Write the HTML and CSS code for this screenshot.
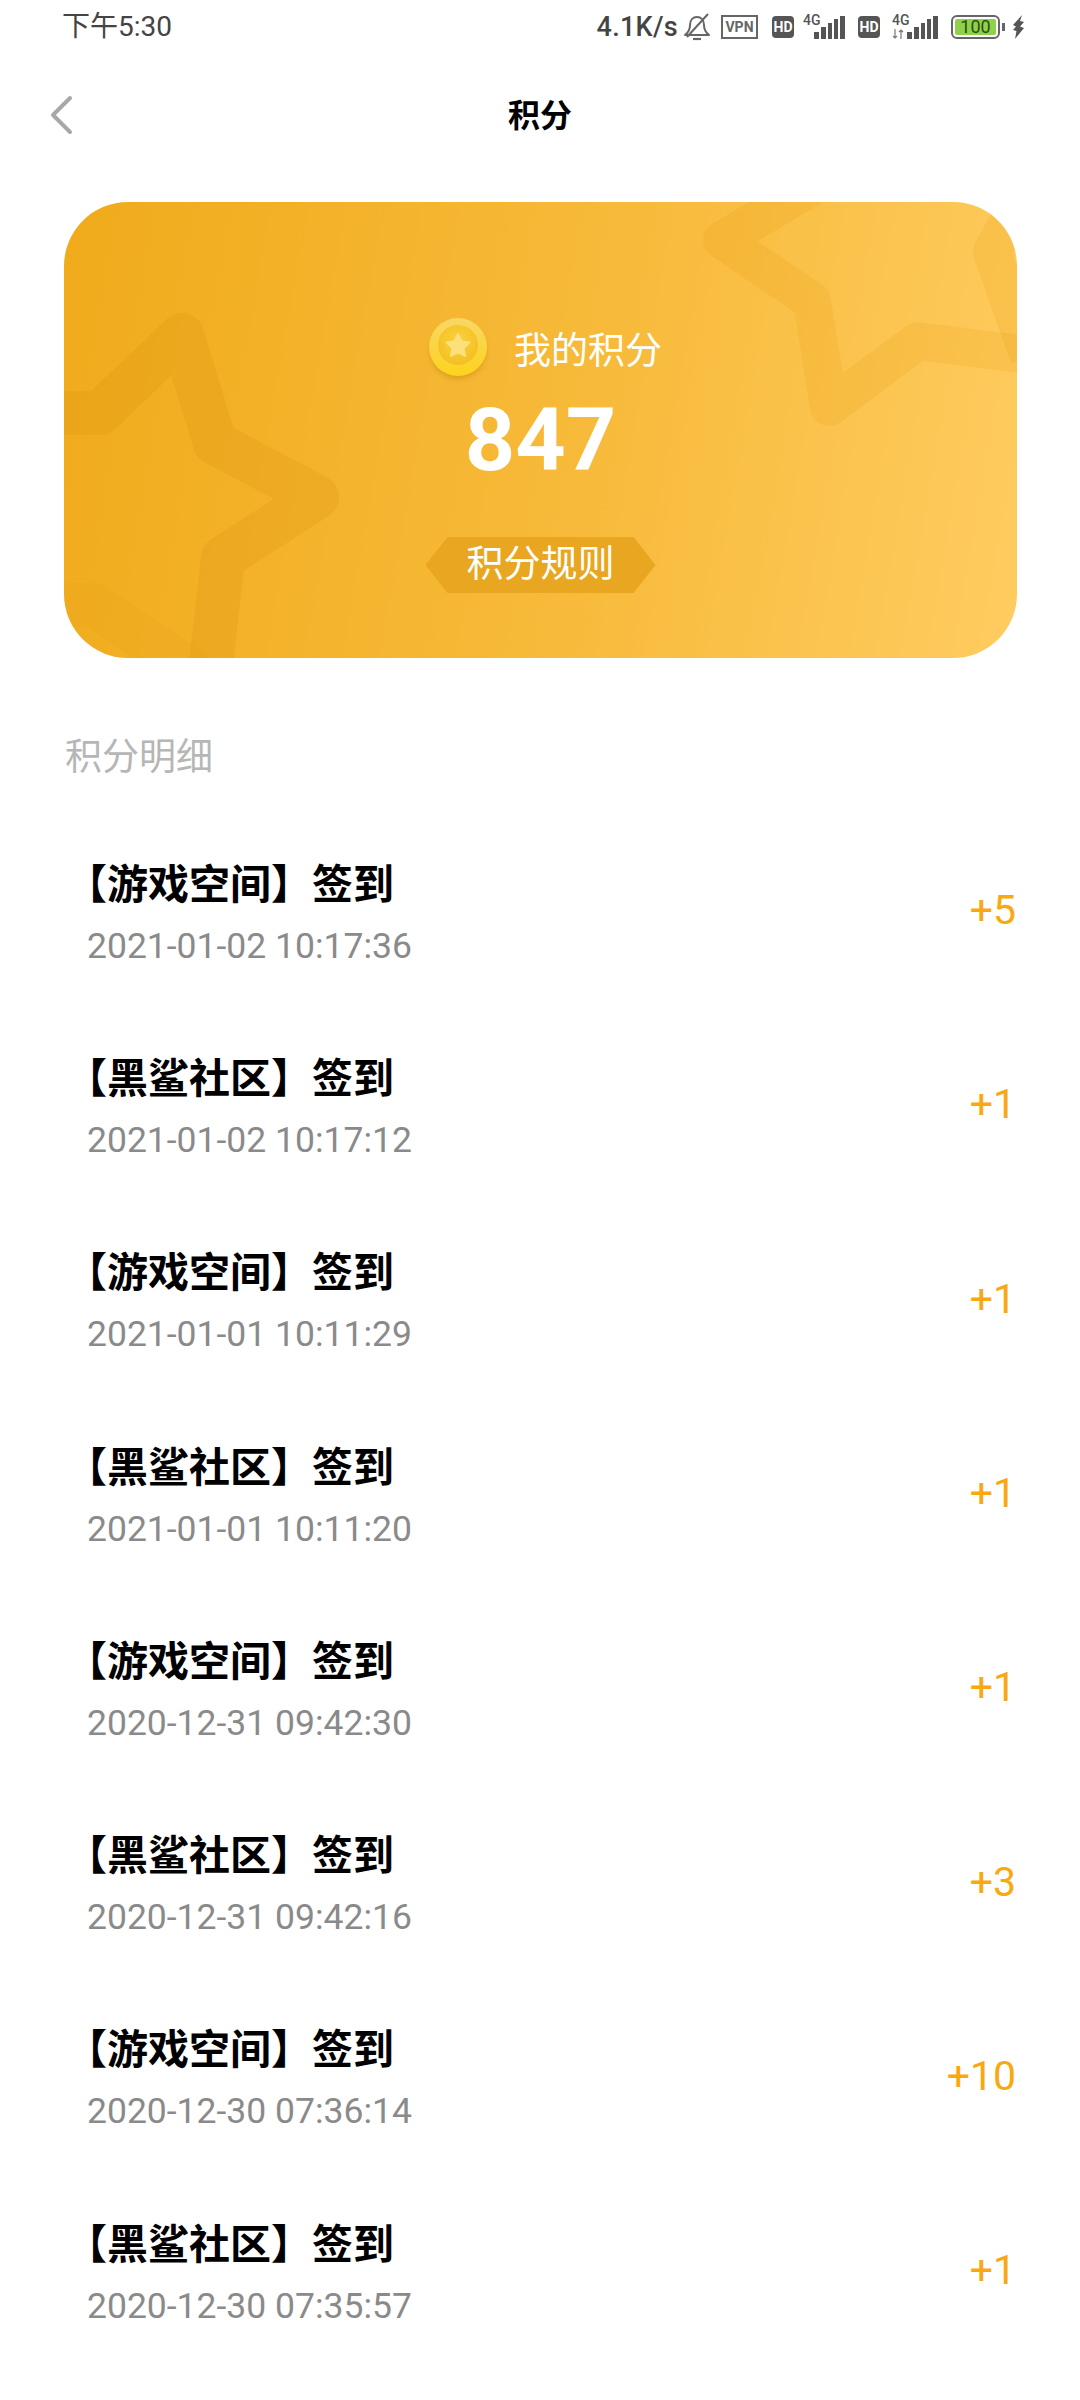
FILE: index.html
```html
<!DOCTYPE html>
<html lang="zh-CN">
<head>
    <meta charset="UTF-8">
    <meta name="viewport" content="width=device-width, initial-scale=1.0">
    <title>积分</title>
    <link rel="stylesheet" href="styles.css">
</head>
<body>
    <svg class="defs" width="0" height="0" aria-hidden="true">
        <symbol id="signal" viewBox="0 0 31 23">
            <rect x="0" y="16" width="5" height="7" fill="#555"/>
            <rect x="7" y="11" width="5" height="12" fill="#555"/>
            <rect x="14" y="7" width="4" height="16" fill="#555"/>
            <rect x="20" y="3" width="4" height="20" fill="#555"/>
            <rect x="26" y="0" width="5" height="23" fill="#555"/>
        </symbol>
    </svg>

    <div class="status-bar">
        <span class="status-time">下午5:30</span>
        <div class="status-icons">
            <span class="net-speed">4.1K/s</span>
            <svg class="icon-bell" width="26" height="28" viewBox="0 0 26 28">
                <path d="M1 22c4-3 5-6 5-10 0-5 3-8 7-8s7 3 7 8c0 4 1 7 5 10z" fill="none" stroke="#666" stroke-width="2" stroke-linejoin="round"/>
                <path d="M9 26h8" stroke="#666" stroke-width="2.200"/>
                <path d="M3 24L24 1" stroke="#666" stroke-width="2"/>
            </svg>
            <span class="vpn">VPN</span>
            <span class="hd">HD</span>
            <div class="net-block">
                <span class="net-4g">4G</span>
                <svg class="signal" width="31" height="23"><use href="#signal"/></svg>
            </div>
            <span class="hd hd-second">HD</span>
            <div class="net-block net-block-wide">
                <span class="net-4g">4G</span>
                <svg class="arrows" width="12" height="10" viewBox="0 0 12 10">
                    <path d="M3 0v9M1 7l2 2 2-2M9 10V1M7 3l2-2 2 2" fill="none" stroke="#777" stroke-width="1.2"/>
                </svg>
                <svg class="signal" width="31" height="23"><use href="#signal"/></svg>
            </div>
            <div class="battery"><span class="battery-level">100</span></div>
            <span class="battery-nub"></span>
            <svg class="icon-bolt" width="13" height="24" viewBox="0 0 13 24">
                <path d="M10 0L1 10l3 1.500L1 15l3.500 1L3 24l9-11-4-1.500L12 7 8 6z" fill="#555"/>
            </svg>
        </div>
    </div>

    <header class="nav-bar">
        <svg class="back-icon" width="24" height="40" viewBox="0 0 24 40">
            <path d="M21 3L4 20l17 17" fill="none" stroke="#a8a8a8" stroke-width="4" stroke-linecap="round" stroke-linejoin="round"/>
        </svg>
        <h1 class="nav-title">积分</h1>
    </header>

    <section class="points-card">
        <svg class="card-stars" width="953" height="456" viewBox="0 0 953 456">
            <path class="star-faint" d="M-20 403H30L130 470"/>
            <path class="star-dark" d="M-20 211H36L118 133L151 241L253 295L159 356L146 470"/>
            <path class="star-light" d="M756 -20L658 38L748 99L765 205L854 139L980 155"/>
            <path class="star-light" d="M960 -10L928 50L965 155"/>
        </svg>
        <div class="card-label-row">
            <svg class="coin" width="66" height="70" viewBox="0 0 66 70">
                <defs>
                    <radialGradient id="coinInner" cx="50%" cy="40%" r="60%">
                        <stop offset="0" stop-color="#fbd23e"/>
                        <stop offset="1" stop-color="#f4bf22"/>
                    </radialGradient>
                    <linearGradient id="coinRim" x1="0" y1="0" x2="0" y2="1">
                        <stop offset="0" stop-color="#f8d766"/>
                        <stop offset="1" stop-color="#fdd31c"/>
                    </linearGradient>
                    <filter id="coinShadow" x="-20%" y="-20%" width="140%" height="140%">
                        <feGaussianBlur stdDeviation="2.500"/>
                    </filter>
                </defs>
                <circle cx="33" cy="37" r="28" fill="#c98a14" opacity=".55" filter="url(#coinShadow)"/>
                <circle cx="33" cy="33" r="29" fill="url(#coinRim)"/>
                <circle cx="33" cy="31" r="20" fill="url(#coinInner)"/>
                <path d="M33 20l3.500 7.500 8 1-6 5.500 1.500 8-7-4-7 4 1.500-8-6-5.500 8-1z" fill="#fbe07c" stroke="#fbe07c" stroke-width="2" stroke-linejoin="round"/>
            </svg>
            <span class="card-label">我的积分</span>
        </div>
        <div class="card-total">847</div>
        <div class="rule-btn">积分规则</div>
    </section>

    <h2 class="section-title">积分明细</h2>

    <ul class="record-list">
        <li class="record">
            <div class="record-info"><p class="record-name">【游戏空间】签到</p><p class="record-time">2021-01-02 10:17:36</p></div>
            <span class="record-points">+5</span>
        </li>
        <li class="record">
            <div class="record-info"><p class="record-name">【黑鲨社区】签到</p><p class="record-time">2021-01-02 10:17:12</p></div>
            <span class="record-points">+1</span>
        </li>
        <li class="record">
            <div class="record-info"><p class="record-name">【游戏空间】签到</p><p class="record-time">2021-01-01 10:11:29</p></div>
            <span class="record-points">+1</span>
        </li>
        <li class="record">
            <div class="record-info"><p class="record-name">【黑鲨社区】签到</p><p class="record-time">2021-01-01 10:11:20</p></div>
            <span class="record-points">+1</span>
        </li>
        <li class="record">
            <div class="record-info"><p class="record-name">【游戏空间】签到</p><p class="record-time">2020-12-31 09:42:30</p></div>
            <span class="record-points">+1</span>
        </li>
        <li class="record">
            <div class="record-info"><p class="record-name">【黑鲨社区】签到</p><p class="record-time">2020-12-31 09:42:16</p></div>
            <span class="record-points">+3</span>
        </li>
        <li class="record">
            <div class="record-info"><p class="record-name">【游戏空间】签到</p><p class="record-time">2020-12-30 07:36:14</p></div>
            <span class="record-points">+10</span>
        </li>
        <li class="record">
            <div class="record-info"><p class="record-name">【黑鲨社区】签到</p><p class="record-time">2020-12-30 07:35:57</p></div>
            <span class="record-points">+1</span>
        </li>
    </ul>
</body>
</html>
```

FILE: styles.css
```css
* {
    box-sizing: border-box;
}

body {
    margin: 0;
    height: 2400px;
    overflow: hidden;
    background: #fff;
    font-family: Roboto, "Noto Sans CJK SC", sans-serif;
    color: #000;
}

.defs {
    position: absolute;
}

/* status bar */
.status-bar {
    display: flex;
    justify-content: space-between;
    align-items: center;
    height: 54px;
    padding: 0 55px 0 62px;
}

.status-time {
    font-size: 28px;
    line-height: 50px;
    margin-bottom: 1px;
    color: #444;
}

.status-icons {
    display: flex;
    align-items: center;
    height: 54px;
}

.net-speed {
    font-size: 27px;
    font-weight: 500;
    letter-spacing: 0.3px;
    color: #444;
    margin-right: 6px;
}

.icon-bell {
    margin-right: 11px;
}

.vpn {
    width: 37px;
    height: 24px;
    border: 2px solid #666;
    font-size: 14px;
    font-weight: 700;
    line-height: 20px;
    text-align: center;
    color: #666;
    margin-right: 14px;
}

.hd {
    width: 22px;
    height: 22px;
    border-radius: 4px;
    background: #555;
    font-size: 14px;
    font-weight: 700;
    line-height: 22px;
    text-align: center;
    color: #fff;
    margin-right: 9px;
}

.net-block {
    position: relative;
    width: 42px;
    height: 24px;
    margin-right: 13px;
}

.net-block-wide {
    width: 46px;
    margin-left: 3px;
}

.net-4g {
    position: absolute;
    left: 0;
    top: -2px;
    font-size: 14px;
    font-weight: 500;
    line-height: 14px;
    color: #555;
}

.signal {
    position: absolute;
    right: 0;
    bottom: 0;
}

.arrows {
    position: absolute;
    left: 0;
    bottom: 0;
}

.battery {
    width: 49px;
    height: 24px;
    border: 2.500px solid #666;
    border-radius: 6px;
    padding: 2px;
}

.battery-level {
    display: block;
    height: 100%;
    border-radius: 2px;
    background: #8fd14a;
    font-size: 18px;
    line-height: 15px;
    text-align: center;
    color: #2c4d12;
}

.battery-nub {
    width: 3px;
    height: 8px;
    background: #666;
    margin: 0 7px 0 2px;
}

/* nav */
.nav-bar {
    position: relative;
    display: flex;
    justify-content: center;
    align-items: center;
    height: 120px;
}

.back-icon {
    position: absolute;
    left: 49px;
    top: 41px;
}

.nav-title {
    margin: 0 0 2px;
    font-size: 32px;
    font-weight: 700;
}

/* card */
.points-card {
    position: relative;
    display: flex;
    flex-direction: column;
    align-items: center;
    width: 953px;
    height: 456px;
    margin: 28px 0 0 64px;
    overflow: hidden;
    border-radius: 64px;
    background: linear-gradient(100deg, #f0ab1b 0%, #f7ba3a 55%, #ffcc60 100%);
    color: #fff;
}

.card-stars {
    position: absolute;
    left: 0;
    top: 0;
}

.card-stars path {
    fill: none;
    stroke-linejoin: round;
}

.star-dark {
    stroke: rgba(214, 140, 10, 0.2);
    stroke-width: 44;
}

.star-faint {
    stroke: rgba(214, 140, 10, 0.08);
    stroke-width: 44;
}

.star-light {
    stroke: rgba(225, 150, 0, 0.15);
    stroke-width: 38;
}

.card-label-row {
    position: relative;
    display: flex;
    align-items: center;
    gap: 23px;
    margin-top: 112px;
    padding-left: 12px;
}

.coin {
    margin: 0 0 6px -6px;
}

.card-label {
    font-size: 37px;
    line-height: 44px;
}

.card-total {
    position: relative;
    font-size: 88px;
    font-weight: 700;
    line-height: 88px;
    margin-top: 6px;
}

.rule-btn {
    position: relative;
    width: 230px;
    height: 56px;
    margin-top: 53px;
    background: #e9a620;
    clip-path: polygon(22px 0, 208px 0, 230px 28px, 208px 56px, 22px 56px, 0 28px);
    font-size: 37px;
    line-height: 56px;
    text-align: center;
}

/* list */
.section-title {
    margin: 74px 0 0 65px;
    font-size: 37px;
    font-weight: 400;
    line-height: 52px;
    color: #b6b6b6;
}

.record-list {
    list-style: none;
    margin: 34px 0 0;
    padding: 0 64px 0 66px;
}

.record {
    display: flex;
    justify-content: space-between;
    align-items: center;
    height: 194.300px;
}

.record-info {
    margin-bottom: 8px;
}

.record-name {
    margin: 0;
    font-size: 41px;
    font-weight: 700;
    line-height: 56px;
}

.record-time {
    margin: 13px 0 0 21px;
    font-size: 35.500px;
    line-height: 40px;
    color: #8a8a8a;
}

.record-points {
    font-size: 41px;
    line-height: 48px;
    color: #f9a90f;
    margin-bottom: 10px;
}
```
